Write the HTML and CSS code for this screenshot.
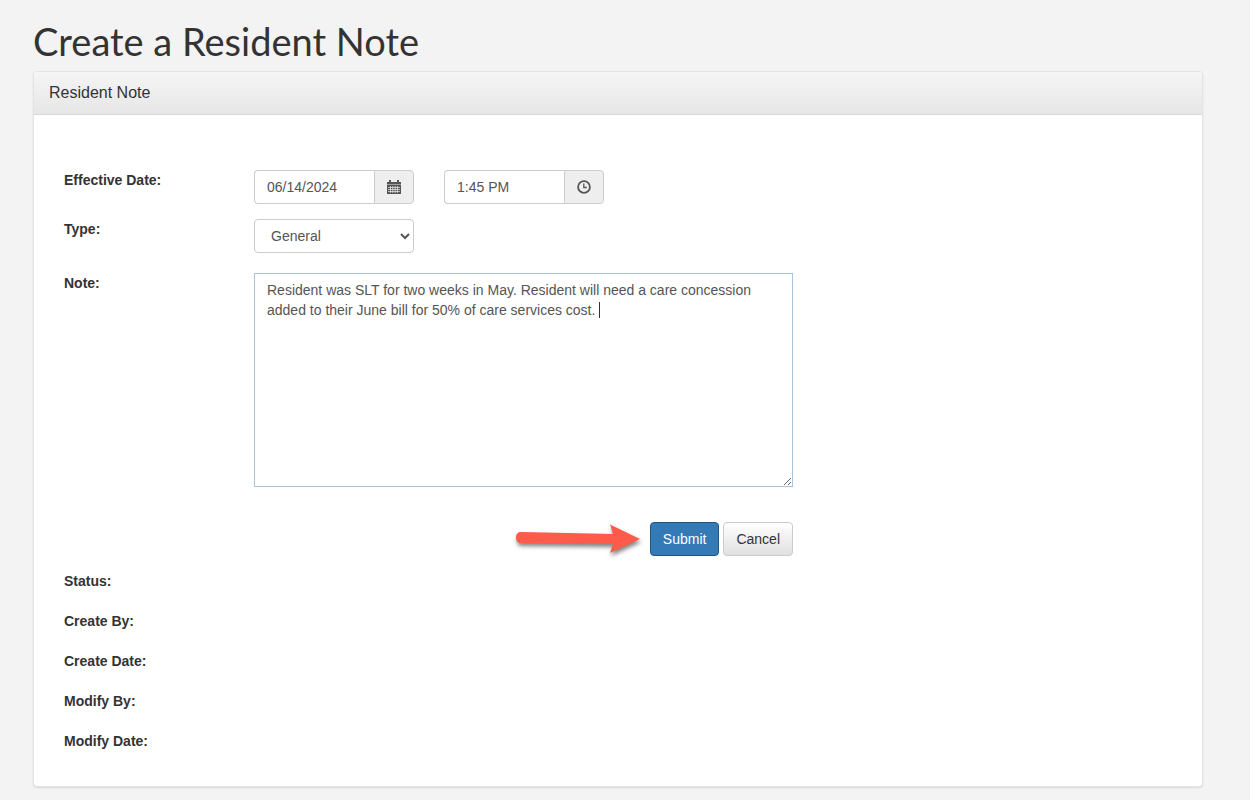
FILE: index.html
```html
<!DOCTYPE html>
<html lang="en">
<head>
    <meta charset="UTF-8">
    <meta name="viewport" content="width=device-width, initial-scale=1.0">
    <title>Create a Resident Note</title>
    <link rel="stylesheet" href="styles.css">
</head>
<body>
    <main class="container">
        <h1>Create a Resident Note</h1>

        <section class="panel">
            <h2 class="panel-heading">Resident Note</h2>

            <form class="panel-body">
                <div class="form-row">
                    <label for="effective-date">Effective Date:</label>
                    <div class="controls">
                        <div class="input-group">
                            <input type="text" id="effective-date" class="form-control" value="06/14/2024">
                            <button type="button" class="addon" aria-label="Pick a date">
                                <svg width="14" height="14" viewBox="0 0 14 14">
                                    <path fill="#555" d="M0 2h2V0h2v2h6V0h2v2h2v2.500H0z"/>
                                    <path fill="#555" d="M0 5h14v9H0z"/>
                                    <path stroke="#eee" stroke-width=".7" d="M1 7.500h12M1 9.500h12M1 11.500h12M3.500 6v7M5.800 6v7M8.200 6v7M10.500 6v7"/>
                                </svg>
                            </button>
                        </div>
                        <div class="input-group">
                            <input type="text" class="form-control" value="1:45 PM" aria-label="Effective time">
                            <button type="button" class="addon" aria-label="Pick a time">
                                <svg width="14" height="14" viewBox="0 0 14 14" fill="none" stroke="#555">
                                    <circle cx="7" cy="7" r="5.900" stroke-width="1.800"/>
                                    <path stroke-width="1.300" d="M6.800 3.500v4h3"/>
                                </svg>
                            </button>
                        </div>
                    </div>
                </div>

                <div class="form-row type-row">
                    <label for="type">Type:</label>
                    <select id="type" class="form-control">
                        <option>General</option>
                        <option>Care</option>
                        <option>Billing</option>
                    </select>
                </div>

                <div class="form-row note-row">
                    <label for="note">Note:</label>
                    <div class="note-box">
                        <textarea id="note" class="form-control">Resident was SLT for two weeks in May. Resident will need a care concession added to their June bill for 50% of care services cost. </textarea>
                        <span class="caret"></span>
                    </div>
                </div>

                <div class="actions">
                    <svg class="arrow" width="134" height="40" viewBox="0 0 134 40">
                        <path fill="#ff5a4a" d="M9 13 L101 15 L98 5.500 L128 20 L98 34 L101 25 L9 24 Q4 24 4 18.500 Q4 13 9 13z"/>
                    </svg>
                    <button type="submit" class="btn btn-primary">Submit</button>
                    <button type="button" class="btn">Cancel</button>
                </div>

                <dl class="record-info">
                    <dt>Status:</dt><dd></dd>
                    <dt>Create By:</dt><dd></dd>
                    <dt>Create Date:</dt><dd></dd>
                    <dt>Modify By:</dt><dd></dd>
                    <dt>Modify Date:</dt><dd></dd>
                </dl>
            </form>
        </section>
    </main>
</body>
</html>
```

FILE: styles.css
```css
* { box-sizing: border-box; }
body { margin: 0; background: #f3f3f3; color: #333; font: 14px/20px "Liberation Sans", Arial, sans-serif; }
.container { padding: 20px 47px 13px 33px; }
h1 { margin: 0 0 9px; font: 400 38px/42px Lato, sans-serif; }

.panel { background: #fff; border: 1px solid #e4e4e4; border-radius: 4px; box-shadow: 0 1px 2px rgba(0,0,0,0.1); }
.panel-heading { margin: 0; padding: 11px 15px; border-bottom: 1px solid #d8d8d8; border-radius: 3px 3px 0 0; background: linear-gradient(#f5f5f5, #e6e6e6); font-size: 16px; font-weight: 400; line-height: 20px; }
.panel-body { padding: 55px 30px 35px; }

.form-row { display: grid; grid-template-columns: 190px minmax(0, 539px); align-items: start; }
label, dt { font-weight: 700; }
.type-row { margin-top: 15px; }
.note-row { margin-top: 20px; }

.controls { display: flex; gap: 30px; }
.input-group { display: flex; width: 160px; }
.form-control { width: 100%; height: 34px; padding: 6px 12px; border: 1px solid #ccc; border-radius: 4px; background: #fff; color: #555; font: inherit; }
.form-control:focus { border-color: #66afe9; outline: 0; }
.input-group .form-control { flex: 1; min-width: 0; border-right: 0; border-radius: 4px 0 0 4px; }
.addon { display: flex; align-items: center; justify-content: center; width: 40px; padding: 0; border: 1px solid #ccc; border-radius: 0 4px 4px 0; background: #eee; cursor: pointer; }
select.form-control { width: 160px; }

.note-box { position: relative; }
textarea.form-control { display: block; height: 214px; border-color: #aac4da; border-radius: 0; resize: both; }
/* text cursor after the last word */
.caret { position: absolute; top: 29px; left: 345px; width: 1px; height: 16px; background: #333; }

.actions { display: flex; justify-content: flex-end; gap: 4px; max-width: 729px; margin-top: 35px; }
.arrow { height: 40px; margin: -3px 0; filter: drop-shadow(1px 3px 2px rgba(0,0,0,0.5)); }
.btn { height: 34px; padding: 6px 12px; border: 1px solid #ccc; border-radius: 4px; background: linear-gradient(#fff, #e0e0e0); color: #333; font: inherit; cursor: pointer; }
.btn-primary { border-color: #245580; background: #337ab7; color: #fff; }

.record-info { display: grid; grid-template-columns: 190px 1fr; gap: 20px 0; margin: 15px 0 0; }
dd { margin: 0; }
```
